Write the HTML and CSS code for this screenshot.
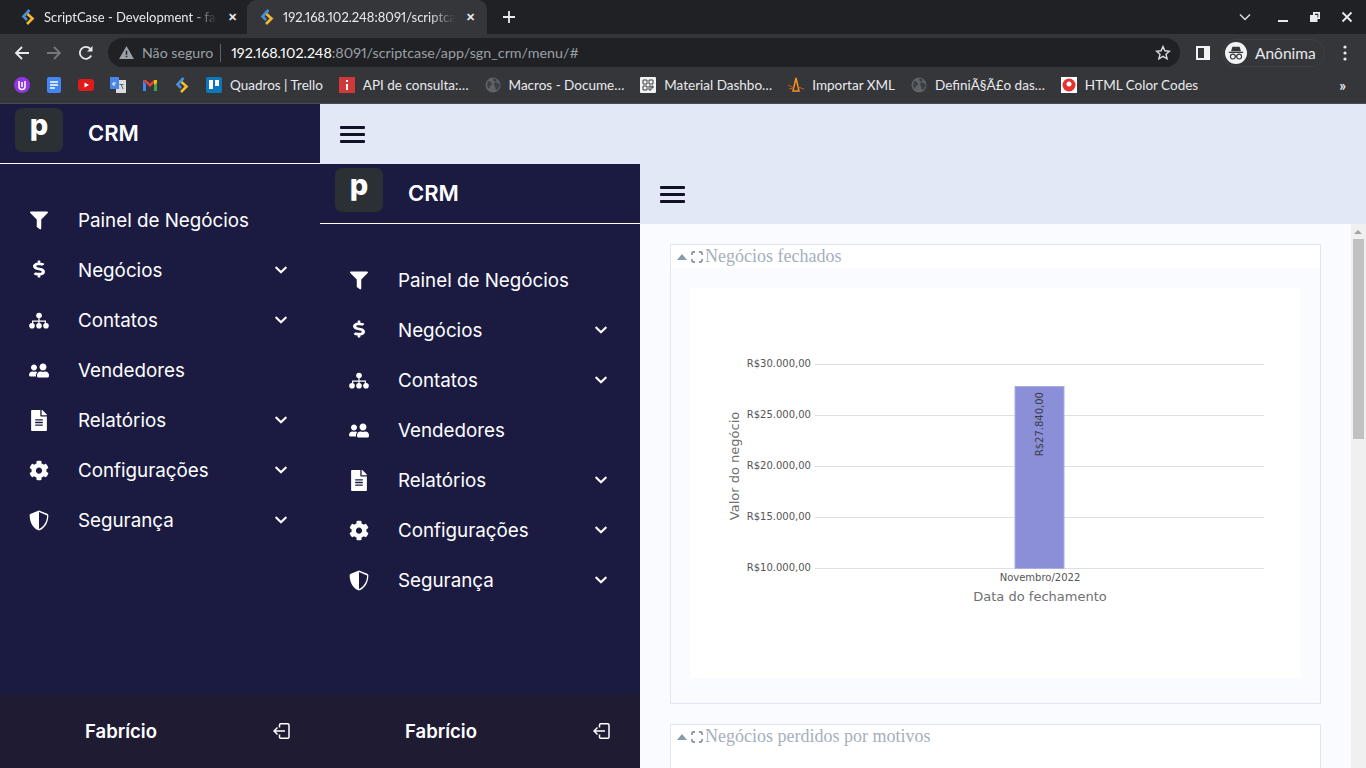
FILE: index.html
```html
<!DOCTYPE html>
<html lang="pt-BR">
<head>
  <meta charset="UTF-8" />
  <title>ScriptCase CRM</title>
  <link rel="stylesheet" href="styles.css">
</head>
<body>
  <svg class="defs" width="0" height="0">
    <symbol id="i-filter" viewBox="-30 -10 572 532"><path d="M487.976 0H24.028C2.71 0-8.047 25.866 7.058 40.971L192 225.941V432c0 7.831 3.821 15.17 10.237 19.662l80 55.98C298.02 518.69 320 507.493 320 487.98V225.941l184.947-184.97C520.021 25.896 509.338 0 487.976 0z"/></symbol>
    <symbol id="i-dollar" viewBox="-96 -15 480 632" preserveAspectRatio="none"><path d="M209.2 233.4l-108-31.6C88.7 198.2 80 186.5 80 173.5c0-16.3 13.2-29.5 29.5-29.5h66.3c12.2 0 24.2 3.7 34.2 10.5 6.1 4.1 14.3 3.1 19.5-2l34.8-34c7.1-6.9 6.1-18.4-1.8-24.5C238 74.8 207.4 64.1 176 64V16c0-8.8-7.2-16-16-16h-32c-8.8 0-16 7.2-16 16v48h-2.5C45.8 64-5.4 118.7.5 183.6c4.2 46.1 39.4 83.6 83.8 96.6l102.5 30c12.5 3.7 21.2 15.3 21.2 28.3 0 16.3-13.2 29.5-29.5 29.5h-66.3C100 368 88 364.3 78 357.5c-6.1-4.1-14.3-3.1-19.5 2l-34.8 34c-7.1 6.9-6.1 18.4 1.8 24.5 24.5 19.2 55.1 29.9 86.5 30v48c0 8.8 7.2 16 16 16h32c8.8 0 16-7.2 16-16v-48.2c46.6-.9 90.3-28.6 105.7-72.7 21.5-61.6-14.6-124.8-72.5-141.7z"/></symbol>
    <symbol id="i-sitemap" viewBox="0 0 20 16"><circle cx="10" cy="3" r="2.800"/><path d="M9.400 5h1.200v3h6.400v3h-1.200V9.200h-5.200V11H9.400V9.200H4.200V11H3V8h6.400z"/><circle cx="3" cy="13.200" r="2.800"/><circle cx="10" cy="13.200" r="2.800"/><circle cx="17" cy="13.200" r="2.800"/></symbol>
    <symbol id="i-users" viewBox="0 0 640 512"><g transform="matrix(-1 0 0 1 640 0)"><path d="M192 256c61.9 0 112-50.1 112-112S253.9 32 192 32 80 82.1 80 144s50.1 112 112 112zm76.8 32h-8.3c-20.8 10-43.9 16-68.5 16s-47.6-6-68.5-16h-8.3C51.6 288 0 339.6 0 403.2V432c0 26.5 21.5 48 48 48h288c26.5 0 48-21.5 48-48v-28.8c0-63.6-51.6-115.2-115.2-115.2zM480 256c53 0 96-43 96-96s-43-96-96-96-96 43-96 96 43 96 96 96zm48 32h-3.8c-13.9 4.8-28.6 8-44.2 8s-30.3-3.2-44.2-8H432c-20.4 0-39.2 5.9-55.7 15.4 24.4 26.3 39.7 61.2 39.7 99.8v38.4c0 2.2-.5 4.3-.6 6.4H592c26.5 0 48-21.5 48-48 0-61.9-50.1-112-112-112z"/></g></symbol>
    <symbol id="i-file" viewBox="0 0 384 512"><path d="M224 136V0H24C10.7 0 0 10.7 0 24v464c0 13.3 10.7 24 24 24h336c13.3 0 24-10.7 24-24V160H248c-13.2 0-24-10.8-24-24zm64 236c0 6.6-5.4 12-12 12H108c-6.6 0-12-5.4-12-12v-8c0-6.6 5.4-12 12-12h168c6.6 0 12 5.4 12 12v8zm0-64c0 6.6-5.4 12-12 12H108c-6.6 0-12-5.4-12-12v-8c0-6.6 5.4-12 12-12h168c6.6 0 12 5.4 12 12v8zm0-72v8c0 6.6-5.4 12-12 12H108c-6.6 0-12-5.4-12-12v-8c0-6.6 5.4-12 12-12h168c6.6 0 12 5.4 12 12zm96-114.1v6.1H256V0h6.1c6.4 0 12.5 2.5 17 7l97.9 98c4.5 4.5 7 10.6 7 16.9z"/></symbol>
    <symbol id="i-cog" viewBox="0 0 512 512"><path d="M487.4 315.7l-42.6-24.6c4.3-23.2 4.3-47 0-70.2l42.6-24.6c4.9-2.8 7.1-8.6 5.5-14-11.1-35.6-30-67.8-54.7-94.6-3.8-4.1-10-5.1-14.8-2.3L380.8 110c-17.9-15.4-38.5-27.3-60.8-35.1V25.8c0-5.6-3.9-10.5-9.4-11.7-36.7-8.2-74.3-7.8-109.2 0-5.5 1.2-9.4 6.1-9.4 11.7V75c-22.2 7.9-42.8 19.8-60.8 35.1L88.7 85.5c-4.9-2.8-11-1.9-14.8 2.3-24.7 26.7-43.6 58.9-54.7 94.6-1.7 5.4.6 11.2 5.5 14L67.3 221c-4.3 23.2-4.3 47 0 70.2l-42.6 24.6c-4.9 2.8-7.1 8.6-5.5 14 11.1 35.6 30 67.8 54.7 94.6 3.8 4.1 10 5.1 14.8 2.3l42.6-24.6c17.9 15.4 38.5 27.3 60.8 35.1v49.2c0 5.6 3.9 10.5 9.4 11.7 36.7 8.2 74.3 7.8 109.2 0 5.5-1.2 9.4-6.1 9.4-11.7v-49.2c22.2-7.9 42.8-19.8 60.8-35.1l42.6 24.6c4.9 2.8 11 1.9 14.8-2.3 24.7-26.7 43.6-58.9 54.7-94.6 1.5-5.5-.7-11.3-5.6-14.1zM256 336c-44.1 0-80-35.9-80-80s35.9-80 80-80 80 35.9 80 80-35.9 80-80 80z"/></symbol>
    <symbol id="i-shield" viewBox="0 0 512 512"><path fill-rule="evenodd" d="M466.5 83.7l-192-80a48.15 48.15 0 0 0-36.9 0l-192 80C27.7 91.1 16 108.6 16 128c0 198.5 114.5 335.7 221.5 380.3 11.800 4.900 25.100 4.900 36.900 0C360.100 472.600 496 349.300 496 128c0-19.400-11.700-36.900-29.500-44.300zM256 474V38l208 88c-3 170-100 295-208 348z"/></symbol>
    <symbol id="i-chevron" viewBox="0 0 448 512"><path d="M207.029 381.476L12.686 187.132c-9.373-9.373-9.373-24.569 0-33.941l22.667-22.667c9.357-9.357 24.522-9.375 33.901-.04L224 284.505l154.745-154.021c9.379-9.335 24.544-9.317 33.901.04l22.667 22.667c9.373 9.373 9.373 24.569 0 33.941L240.971 381.476c-9.373 9.372-24.569 9.372-33.942 0z"/></symbol>
    <symbol id="i-logout" viewBox="1 1 17 16"><path d="M7.500 5.500V3A1.300 1.300 0 0 1 8.800 1.700h7A1.300 1.300 0 0 1 17 3v12a1.300 1.300 0 0 1-1.300 1.300h-7A1.300 1.300 0 0 1 7.500 15v-2.500M13 9H2M5.500 5.500 2 9l3.500 3.500" fill="none" stroke="currentColor" stroke-width="1.500"/></symbol>
    <symbol id="i-sc" viewBox="0 0 16 16"><path d="M9.500 1 3.500 7.500l3.500 3.500" fill="none" stroke="#4a90d9" stroke-width="2.600"/><path d="M7.500 5l5 4.500L7 15" fill="none" stroke="#f4b92e" stroke-width="2.600"/></symbol>
    <symbol id="i-globe" viewBox="0 0 16 16"><circle cx="8" cy="8" r="7.500" fill="#5f6368"/><path d="M3 4l3 1 1 3-2 1-1 3-2-3zM9 1l3 2-2 2 3 1 2 2-2 4-2 1-1-3-1-3 1-2-2-2z" fill="#3c3f43"/></symbol>
  </svg>

  <div class="browser">
    <div class="tabstrip">
      <div class="tab">
        <svg class="favicon"><use href="#i-sc"/></svg>
        <span class="tab-title">ScriptCase - Development - fa</span>
        <span class="tab-close">✕</span>
      </div>
      <div class="tab tab-active">
        <svg class="favicon"><use href="#i-sc"/></svg>
        <span class="tab-title">192.168.102.248:8091/scriptca</span>
        <span class="tab-close">✕</span>
      </div>
      <svg class="new-tab" viewBox="0 0 12 12"><path d="M6 0v12M0 6h12" stroke="#e8eaed" stroke-width="1.800"/></svg>
      <div class="window-btns">
        <svg class="win-icon" viewBox="0 0 12 12"><path d="M1 3.500l5 5 5-5" fill="none" stroke="#dadce0" stroke-width="1.500"/></svg>
        <svg class="win-icon" viewBox="0 0 12 12"><path d="M1 10h10" stroke="#e8eaed" stroke-width="2"/></svg>
        <svg class="win-icon" viewBox="0 0 12 12"><path d="M4 1h7v7H8.500V11H1V4h3zm2 1.800v1.200h2.500v2.500h.8V2.800z" fill="#e8eaed" fill-rule="evenodd"/></svg>
        <svg class="win-icon" viewBox="0 0 12 12"><path d="M1.500 1.500l9 9M10.500 1.500l-9 9" stroke="#e8eaed" stroke-width="1.800"/></svg>
      </div>
    </div>

    <div class="toolbar">
      <svg class="nav-btn" viewBox="0 0 16 16"><path d="M15 8H2M8 2 2 8l6 6" fill="none" stroke="#e8eaed" stroke-width="1.800"/></svg>
      <svg class="nav-btn" viewBox="0 0 16 16"><path d="M1 8h13M8 2l6 6-6 6" fill="none" stroke="#75777a" stroke-width="1.800"/></svg>
      <svg class="nav-btn" viewBox="0 0 16 16"><path d="M13.200 10.500A6 6 0 1 1 12.200 3.700" fill="none" stroke="#e8eaed" stroke-width="1.800"/><path d="M14.500 1v5.500H9z" fill="#e8eaed"/></svg>
      <div class="omnibox">
        <svg class="warn" viewBox="0 0 16 14"><path d="M8 0l8 14H0z" fill="#9aa0a6"/><path d="M7.200 5h1.600v4.500H7.200zM7.200 10.500h1.600V12H7.200z" fill="#202124"/></svg>
        <span class="not-secure">Não seguro</span>
        <span class="omni-sep"></span>
        <span class="url"><b>192.168.102.248</b>:8091/scriptcase/app/sgn_crm/menu/#</span>
        <svg class="star" viewBox="0 0 16 16"><path d="M8 1.500l1.900 4.300 4.600.4-3.500 3 1.100 4.600L8 11.400l-4.100 2.400L5 9.200l-3.500-3 4.600-.4z" fill="none" stroke="#dadce0" stroke-width="1.400"/></svg>
      </div>
      <svg class="side-panel" viewBox="0 0 14 14"><path d="M0 0h14v14H0zM2 2v10h6V2z" fill="#f1f3f4" fill-rule="evenodd"/></svg>
      <div class="profile">
        <span class="incognito">
          <svg viewBox="0 0 20 20"><path d="M6 3h8l1.500 5h-11zM2 8.500h16v1.500H2z" fill="#35363a"/><circle cx="6.500" cy="14" r="2.700" fill="none" stroke="#35363a" stroke-width="1.300"/><circle cx="13.500" cy="14" r="2.700" fill="none" stroke="#35363a" stroke-width="1.300"/><path d="M9 13.500h2" stroke="#35363a" stroke-width="1.300"/></svg>
        </span>
        <span class="profile-name">Anônima</span>
      </div>
      <svg class="menu-dots" viewBox="0 0 4 16"><circle cx="2" cy="2" r="1.600"/><circle cx="2" cy="8" r="1.600"/><circle cx="2" cy="14" r="1.600"/></svg>
    </div>

    <div class="bookmarks">
      <span class="bm"><svg class="bm-icon" viewBox="0 0 16 16"><circle cx="8" cy="8" r="8" fill="#9334e6"/><path d="M5 4v5.500a3 3 0 0 0 6 0V4M8 5v5" fill="none" stroke="#fff" stroke-width="1.500"/></svg></span>
      <span class="bm"><svg class="bm-icon" viewBox="0 0 16 16"><rect x="1" width="14" height="16" rx="2" fill="#4285f4"/><path d="M4 5h8M4 8h8M4 11h5" stroke="#fff" stroke-width="1.500"/></svg></span>
      <span class="bm"><svg class="bm-icon" viewBox="0 0 16 16"><rect y="2" width="16" height="12" rx="3" fill="#e01b1b"/><path d="M6.500 5.500v5L11 8z" fill="#fff"/></svg></span>
      <span class="bm"><svg class="bm-icon" viewBox="0 0 16 16"><path d="M6 3h10v13H6z" fill="#dadce0"/><path d="M0 0h9v12H0z" fill="#4a86e8"/><path d="M11 7l2 5M13.500 7.500h-4" stroke="#5f6368"/><path d="M6 6H3v2h2" fill="none" stroke="#fff"/></svg></span>
      <span class="bm"><svg class="bm-icon" viewBox="0 0 16 16"><path d="M1 3v11h3V7z" fill="#4285f4"/><path d="M15 3v11h-3V7z" fill="#34a853"/><path d="M1 3l3 0 4 3.500L12 3h3L8 10z" fill="#ea4335"/><path d="M12 3h3v3l-3 2z" fill="#fbbc04"/></svg></span>
      <span class="bm"><svg class="bm-icon" viewBox="0 0 16 16"><use href="#i-sc"/></svg></span>
      <span class="bm"><svg class="bm-icon" viewBox="0 0 16 16"><rect width="16" height="16" rx="2" fill="#0c79bf"/><rect x="3" y="3" width="4" height="9" fill="#fff"/><rect x="9" y="3" width="4" height="6" fill="#fff"/></svg>Quadros | Trello</span>
      <span class="bm"><svg class="bm-icon" viewBox="0 0 16 16"><rect width="16" height="16" fill="#d13838"/><path d="M7 3h2v2H7zM7 7h2v6H7z" fill="#fff"/></svg>API de consulta:…</span>
      <span class="bm"><svg class="bm-icon"><use href="#i-globe"/></svg>Macros - Docume…</span>
      <span class="bm"><svg class="bm-icon" viewBox="0 0 16 16"><rect width="16" height="16" rx="1" fill="#f1f3f4"/><path d="M3 3h4v4H3zM9 3h4v4H9zM3 9h4v4H3zM9 9h2v4H9zM12 9h1v2h-1z" fill="none" stroke="#3c4043"/></svg>Material Dashbo…</span>
      <span class="bm"><svg class="bm-icon" viewBox="0 0 16 16"><path d="M8 1l3 13H5z" fill="none" stroke="#f29423" stroke-width="1.500"/><path d="M0 8l6 3M1 12l5-1M16 12l-6-2" stroke="#d9541e"/></svg>Importar XML</span>
      <span class="bm"><svg class="bm-icon"><use href="#i-globe"/></svg>DefiniÃ§Ã£o das…</span>
      <span class="bm"><svg class="bm-icon" viewBox="0 0 16 16"><rect width="16" height="16" fill="#fff"/><circle cx="8" cy="8" r="6.500" fill="#e8322d"/><circle cx="8" cy="7" r="2.500" fill="#fff"/></svg>HTML Color Codes</span>
      <span class="bm-more">»</span>
    </div>
  </div>

  <div class="app app-outer">
    <aside class="sidebar">
      <div class="brand"><span class="logo">p</span><span class="brand-name">CRM</span></div>
      <nav class="menu">
        <a class="menu-item"><svg class="menu-icon"><use href="#i-filter"/></svg><span class="menu-label">Painel de Negócios</span></a>
        <a class="menu-item"><svg class="menu-icon"><use href="#i-dollar"/></svg><span class="menu-label">Negócios</span><svg class="chevron"><use href="#i-chevron"/></svg></a>
        <a class="menu-item"><svg class="menu-icon"><use href="#i-sitemap"/></svg><span class="menu-label">Contatos</span><svg class="chevron"><use href="#i-chevron"/></svg></a>
        <a class="menu-item"><svg class="menu-icon"><use href="#i-users"/></svg><span class="menu-label">Vendedores</span></a>
        <a class="menu-item"><svg class="menu-icon"><use href="#i-file"/></svg><span class="menu-label">Relatórios</span><svg class="chevron"><use href="#i-chevron"/></svg></a>
        <a class="menu-item"><svg class="menu-icon"><use href="#i-cog"/></svg><span class="menu-label">Configurações</span><svg class="chevron"><use href="#i-chevron"/></svg></a>
        <a class="menu-item"><svg class="menu-icon"><use href="#i-shield"/></svg><span class="menu-label">Segurança</span><svg class="chevron"><use href="#i-chevron"/></svg></a>
      </nav>
      <div class="side-footer"><span class="user-name">Fabrício</span><svg class="logout"><use href="#i-logout"/></svg></div>
    </aside>

    <div class="main">
      <div class="topbar"><span class="burger"><i></i><i></i><i></i></span></div>

      <div class="app">
        <aside class="sidebar">
          <div class="brand"><span class="logo">p</span><span class="brand-name">CRM</span></div>
          <nav class="menu">
            <a class="menu-item"><svg class="menu-icon"><use href="#i-filter"/></svg><span class="menu-label">Painel de Negócios</span></a>
            <a class="menu-item"><svg class="menu-icon"><use href="#i-dollar"/></svg><span class="menu-label">Negócios</span><svg class="chevron"><use href="#i-chevron"/></svg></a>
            <a class="menu-item"><svg class="menu-icon"><use href="#i-sitemap"/></svg><span class="menu-label">Contatos</span><svg class="chevron"><use href="#i-chevron"/></svg></a>
            <a class="menu-item"><svg class="menu-icon"><use href="#i-users"/></svg><span class="menu-label">Vendedores</span></a>
            <a class="menu-item"><svg class="menu-icon"><use href="#i-file"/></svg><span class="menu-label">Relatórios</span><svg class="chevron"><use href="#i-chevron"/></svg></a>
            <a class="menu-item"><svg class="menu-icon"><use href="#i-cog"/></svg><span class="menu-label">Configurações</span><svg class="chevron"><use href="#i-chevron"/></svg></a>
            <a class="menu-item"><svg class="menu-icon"><use href="#i-shield"/></svg><span class="menu-label">Segurança</span><svg class="chevron"><use href="#i-chevron"/></svg></a>
          </nav>
          <div class="side-footer"><span class="user-name">Fabrício</span><svg class="logout"><use href="#i-logout"/></svg></div>
        </aside>

        <div class="main">
          <div class="topbar"><span class="burger"><i></i><i></i><i></i></span></div>

          <div class="content-wrap">
            <div class="content">
              <section class="card">
                <div class="card-title">
                  <span class="caret"></span>
                  <svg class="expand" viewBox="-1 -1 12 12"><path d="M0 3V1.500Q0 0 1.500 0H3M7 0h1.500Q10 0 10 1.500V3M10 7v1.500Q10 10 8.500 10H7M3 10H1.500Q0 10 0 8.500V7" fill="none" stroke="#8a9aa8" stroke-width="1.800"/></svg>
                  <span class="card-name">Negócios fechados</span>
                </div>
                <div class="card-body">
                  <svg class="chart" viewBox="0 0 610 390">
                    <g class="grid">
                      <path d="M125 76.500h449M125 127.500h449M125 178.500h449M125 229.500h449M125 280.500h449"/>
                    </g>
                    <g class="ticks">
                      <text x="121" y="79">R$30.000,00</text>
                      <text x="121" y="130">R$25.000,00</text>
                      <text x="121" y="181">R$20.000,00</text>
                      <text x="121" y="232">R$15.000,00</text>
                      <text x="121" y="283">R$10.000,00</text>
                    </g>
                    <rect class="bar" x="325" y="98.500" width="49" height="182"/>
                    <text class="bar-value" transform="translate(353 104) rotate(-90)">R$27.840,00</text>
                    <text class="x-tick" x="350" y="293">Novembro/2022</text>
                    <text class="axis-title" x="350" y="313">Data do fechamento</text>
                    <text class="axis-title" transform="translate(49 178) rotate(-90)">Valor do negócio</text>
                  </svg>
                </div>
              </section>

              <section class="card">
                <div class="card-title">
                  <span class="caret"></span>
                  <svg class="expand" viewBox="-1 -1 12 12"><path d="M0 3V1.500Q0 0 1.500 0H3M7 0h1.500Q10 0 10 1.500V3M10 7v1.500Q10 10 8.500 10H7M3 10H1.500Q0 10 0 8.500V7" fill="none" stroke="#8a9aa8" stroke-width="1.800"/></svg>
                  <span class="card-name">Negócios perdidos por motivos</span>
                </div>
                <div class="card-empty"></div>
              </section>
            </div>
            <div class="scrollbar">
              <span class="scroll-up"></span>
              <span class="scroll-thumb"></span>
            </div>
          </div>
        </div>
      </div>
    </div>
  </div>
</body>
</html>
```

FILE: styles.css
```css
* {
  margin: 0;
  padding: 0;
  box-sizing: border-box;
}

html, body {
  height: 768px;
  overflow: hidden;
}

body {
  display: flex;
  flex-direction: column;
  font-family: 'Inter', sans-serif;
  background: #1b1b42;
}

.defs {
  position: absolute;
}

/* === BROWSER CHROME === */
.browser {
  height: 104px;
  flex: none;
  font-family: 'Lato', sans-serif;
  font-variant-numeric: proportional-nums;
  color: #e8eaed;
  background: #35363a;
  border-bottom: 1px solid #4a4b4f;
}

.tabstrip {
  height: 34px;
  display: flex;
  align-items: center;
  background: #202124;
}

.tab {
  width: 247px;
  height: 34px;
  padding: 0 8px 0 20px;
  display: flex;
  align-items: center;
  gap: 8px;
  font-size: 13px;
}

.tab-active {
  width: 240px;
  padding: 0 10px 0 12px;
  background: #35363a;
  border-radius: 9px 9px 0 0;
}

.favicon {
  width: 16px;
  height: 16px;
  flex: none;
}

.tab-title {
  flex: 1;
  min-width: 0;
  white-space: nowrap;
  -webkit-mask-image: linear-gradient(to right, #000 85%, transparent);
  mask-image: linear-gradient(to right, #000 85%, transparent);
}

.tab-close {
  width: 14px;
  flex: none;
  font-size: 11px;
  font-weight: 700;
  text-align: center;
}

.new-tab {
  width: 12px;
  height: 12px;
  margin-left: 16px;
}

.window-btns {
  margin-left: auto;
  padding-right: 13px;
  display: flex;
  gap: 20px;
}

.win-icon {
  width: 12px;
  height: 12px;
}

.win-icon:first-child {
  margin-right: 6px;
}

.toolbar {
  height: 34px;
  padding: 3px 0 0 14px;
  display: flex;
  align-items: center;
  gap: 16px;
}

.nav-btn {
  width: 16px;
  height: 16px;
  flex: none;
}

.omnibox {
  width: 1072px;
  height: 29px;
  margin-left: -2px;
  padding: 0 9px 0 11px;
  display: flex;
  align-items: center;
  background: #202124;
  border-radius: 15px;
  font-size: 14.300px;
  color: #9aa0a6;
}

.warn {
  width: 15px;
  height: 13px;
  margin-right: 8px;
}

.not-secure {
  color: #9aa0a6;
  font-size: 14.200px;
}

.omni-sep {
  width: 1px;
  height: 18px;
  margin: 0 10px 0 7px;
  background: #5f6368;
}

.url {
  flex: 1;
}

.url b {
  font-weight: 400;
  color: #fff;
}

.star {
  width: 16px;
  height: 16px;
}

.side-panel {
  width: 14px;
  height: 14px;
  flex: none;
}

.profile {
  width: 103px;
  height: 28px;
  margin-left: -4px;
  padding-left: 2px;
  display: flex;
  align-items: center;
  gap: 8px;
  border: 1px solid #3f4044;
  border-radius: 14px;
  font-size: 15.500px;
}

.incognito {
  width: 22px;
  height: 22px;
  flex: none;
  display: flex;
  background: #f1f3f4;
  border-radius: 50%;
  padding: 2px;
}

.menu-dots {
  width: 4px;
  height: 16px;
  flex: none;
  fill: #e8eaed;
  margin-left: 2px;
}

.bookmarks {
  height: 35px;
  padding: 0 0 1px 14px;
  display: flex;
  align-items: center;
  gap: 16px;
  font-size: 13.500px;
  white-space: nowrap;
  color: #e8eaed;
}

.bm {
  display: flex;
  align-items: center;
  gap: 8px;
}

.bm-icon {
  width: 16px;
  height: 16px;
  flex: none;
}

.bm-more {
  margin-left: auto;
  padding-right: 20px;
  font-size: 15px;
  font-weight: 700;
}

/* === APP LAYOUT === */
.app {
  flex: 1;
  min-height: 0;
  display: flex;
}

.sidebar {
  width: 320px;
  flex: none;
  display: flex;
  flex-direction: column;
  background: #1b1b42;
  color: #fff;
}

.brand {
  height: 60px;
  flex: none;
  padding: 4px 0 0 15px;
  display: flex;
  align-items: flex-start;
  border-bottom: 1px solid #fff;
}

.logo {
  width: 48px;
  height: 44px;
  display: flex;
  justify-content: center;
  background: #2a3033;
  border-radius: 7px;
  font-size: 29px;
  font-weight: 800;
  line-height: 33px;
}

.brand-name {
  margin: 10px 0 0 25px;
  font-size: 22px;
  font-weight: 600;
  line-height: 30px;
}

.menu {
  flex: 1;
  padding-top: 30px;
}

.menu-item {
  height: 50px;
  padding: 0 33px 0 29px;
  display: flex;
  align-items: center;
}

.menu-icon {
  width: 20px;
  height: 21px;
  margin-top: 3px;
  flex: none;
  fill: #fff;
}

.menu-label {
  flex: 1;
  margin: 2px 0 0 29px;
  font-size: 18.800px;
}

.chevron {
  width: 12px;
  height: 14px;
  margin-top: 1px;
  fill: #fff;
}

.side-footer {
  height: 74px;
  flex: none;
  padding: 0 30px 0 85px;
  display: flex;
  align-items: center;
  justify-content: space-between;
  background: #1e1b33;
}

.user-name {
  font-size: 18.500px;
  font-weight: 600;
}

.logout {
  width: 17px;
  height: 16px;
  color: #fff;
}

.main {
  flex: 1;
  min-width: 0;
  display: flex;
  flex-direction: column;
}

.topbar {
  height: 60px;
  flex: none;
  padding-left: 20px;
  display: flex;
  align-items: center;
  background: #e2e8f6;
}

.burger {
  width: 25px;
  display: flex;
  flex-direction: column;
  gap: 4px;
}

.burger i {
  height: 3px;
  background: #111128;
  border-radius: 1px;
}

/* === CONTENT === */
.content-wrap {
  flex: 1;
  min-height: 0;
  display: flex;
  background: #f9fbff;
}

.content {
  flex: 1;
  padding: 20px 30px 0;
  display: flex;
  flex-direction: column;
  gap: 20px;
  overflow: hidden;
}

.card {
  flex: none;
  border: 1px solid #dfe7f0;
}

.card-title {
  height: 23px;
  padding-left: 6px;
  display: flex;
  align-items: center;
  background: #fff;
}

.caret {
  width: 0;
  height: 0;
  border-left: 5px solid transparent;
  border-right: 5px solid transparent;
  border-bottom: 6px solid #8a9aa8;
  margin-right: 4px;
}

.expand {
  width: 12px;
  height: 12px;
  margin-right: 2px;
}

.card-name {
  font-family: 'Liberation Serif', serif;
  font-size: 18px;
  color: #a4b0bd;
}

.card-body {
  padding: 20px 20px 25px 19px;
  background: #f9fbff;
}

.card-empty {
  height: 200px;
  background: #fff;
}

.chart {
  width: 610px;
  height: 390px;
  display: block;
  background: #fff;
  font-family: 'DejaVu Sans', sans-serif;
}

.grid path {
  stroke: #dcdfe4;
  fill: none;
}

.ticks text {
  font-size: 10px;
  fill: #555;
  text-anchor: end;
}

.bar {
  fill: #8b8fd8;
  stroke: #a9ade6;
}

.bar-value {
  font-size: 10px;
  fill: #3c3c46;
  text-anchor: end;
}

.x-tick {
  font-size: 10px;
  fill: #555;
  text-anchor: middle;
}

.axis-title {
  font-size: 13px;
  fill: #70706f;
  text-anchor: middle;
}

.scrollbar {
  width: 15px;
  flex: none;
  position: relative;
  background: #f0f0f0;
}

.scroll-up {
  position: absolute;
  top: 6px;
  left: 3px;
  border-left: 4px solid transparent;
  border-right: 4px solid transparent;
  border-bottom: 4px solid #a3a3a3;
}

.scroll-thumb {
  position: absolute;
  top: 15px;
  left: 2px;
  width: 11px;
  height: 200px;
  background: #c1c1c1;
}
```
